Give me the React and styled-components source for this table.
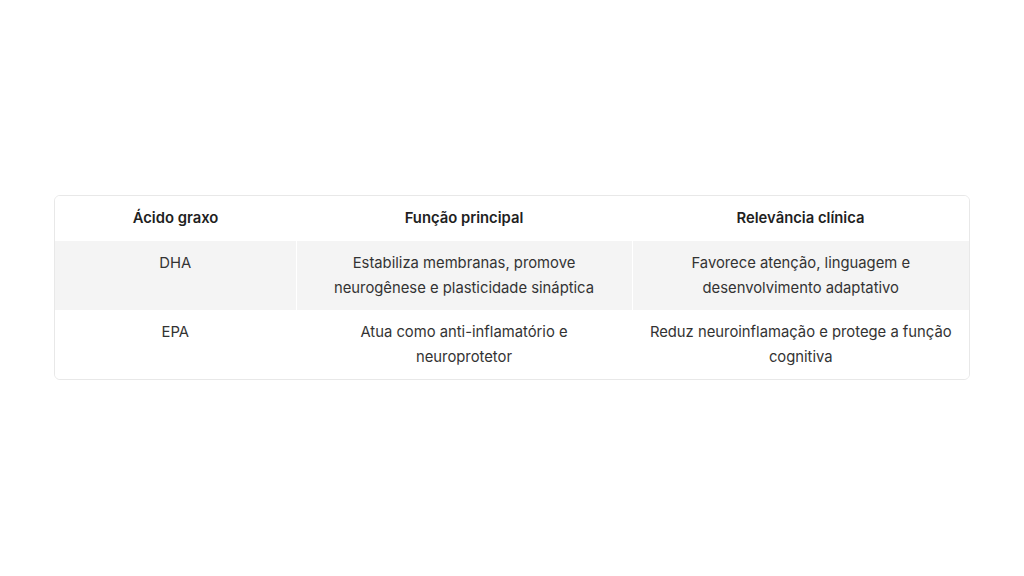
import React from "react";
import styled, { createGlobalStyle } from "styled-components";

const Global = createGlobalStyle`
  html, body { margin: 0; padding: 0; background: #ffffff; }
  body { font-family: Inter, "Liberation Sans", sans-serif; color: #2b2b2b; }
`;

const Page = styled.div`
  width: 1024px;
  height: 576px;
  display: flex;
  align-items: center;
  justify-content: center;
  box-sizing: border-box;
  padding-bottom: 2px;
`;

const Frame = styled.div`
  width: 916px;
  border: 1px solid #e8e8e8;
  border-radius: 6px;
  overflow: hidden;
  box-sizing: border-box;
`;

const Table = styled.table`
  width: 100%;
  border-collapse: collapse;
  table-layout: fixed;
  font-size: 14.8px;
  line-height: 25px;
`;

const Row = styled.tr`
  background: ${(p) => (p.$shade ? "#f4f4f4" : "#ffffff")};
`;

const Head = styled.th`
  font-weight: 600;
  color: #1f1f1f;
  text-align: center;
  padding: 10px 16px 10px;
  height: 45px;
  box-sizing: border-box;
`;

const Cell = styled.td`
  text-align: center;
  vertical-align: top;
  color: #333333;
  padding: 10px 16px 9px;
  height: 69px;
  box-sizing: border-box;
  & + & { border-left: 1px solid #ffffff; }
`;

const rows = [
  ["DHA", "Estabiliza membranas, promove neurogênese e plasticidade sináptica", "Favorece atenção, linguagem e desenvolvimento adaptativo"],
  ["EPA", "Atua como anti-inflamatório e neuroprotetor", "Reduz neuroinflamação e protege a função cognitiva"],
];

export default function App() {
  return (
    <>
      <Global />
      <Page>
        <Frame>
          <Table>
            <colgroup>
              <col style={{ width: 241 }} />
              <col style={{ width: 336 }} />
              <col />
            </colgroup>
            <thead>
              <Row>
                <Head>Ácido graxo</Head>
                <Head>Função principal</Head>
                <Head>Relevância clínica</Head>
              </Row>
            </thead>
            <tbody>
              {rows.map((r, i) => (
                <Row key={i} $shade={i % 2 === 0}>
                  {r.map((c, j) => (
                    <Cell key={j}>{c}</Cell>
                  ))}
                </Row>
              ))}
            </tbody>
          </Table>
        </Frame>
      </Page>
    </>
  );
}
